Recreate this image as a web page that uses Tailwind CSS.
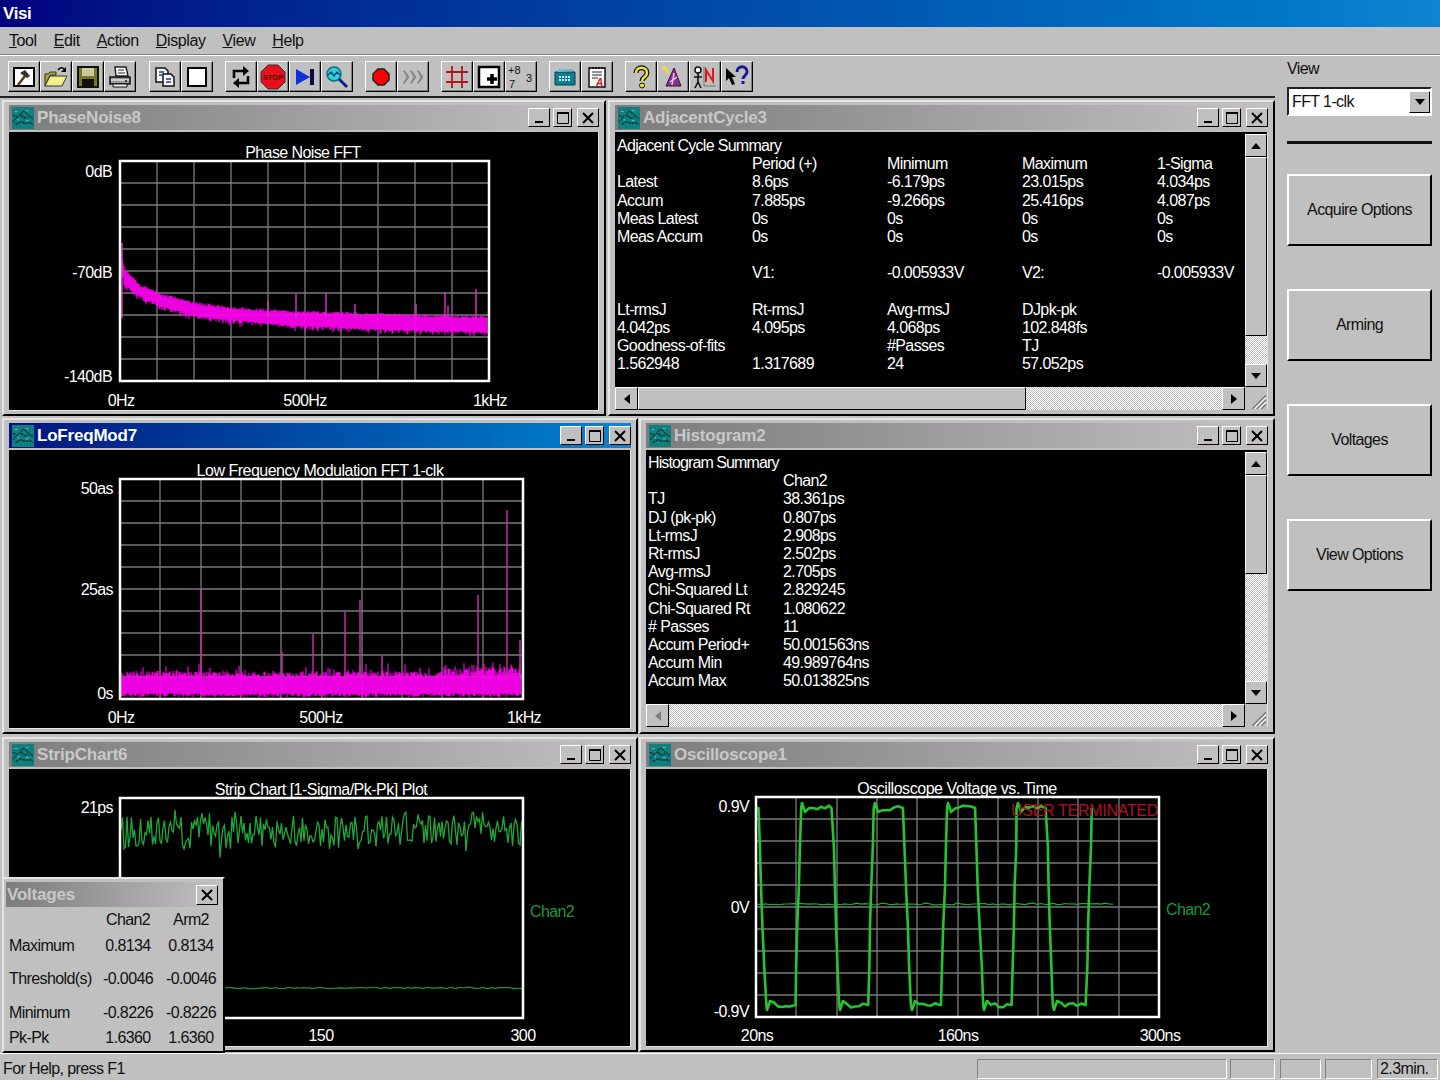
<!DOCTYPE html>
<html lang="en">
<head>
  <meta charset="UTF-8">
  <title>Visi</title>
  <script src="https://cdn.jsdelivr.net/npm/@tailwindcss/browser@4"></script>
</head>
<body class="w-[1440px] h-[1080px] overflow-hidden bg-[#c0c0c0] text-[#111] text-[16px] tracking-[-0.6px] font-['Liberation_Sans',Arial,sans-serif]">

  <svg class="hidden">
    <symbol id="win-icon" viewBox="0 0 24 24">
      <rect width="24" height="24" fill="#0f8080"/>
      <path d="M1 16c3-1 3-5 6-6s3-4 5-5 4 3 6 4 3 3 5 4" fill="none" stroke="#06302f" stroke-width="1.5" stroke-dasharray="2 1"/>
      <path d="M1 9l4 2M4 19l6-3 4 2 5-1 4 2M10 9l3 3 5-1" fill="none" stroke="#06302f" stroke-width="1.5" stroke-dasharray="3 1"/>
      <path d="M3 5h3M15 4h3M6 14h2M15 15h3" stroke="#9fb8b8" stroke-width="1"/>
    </symbol>
    <symbol id="g-min" viewBox="0 0 14 14"><rect x="3" y="10" width="8" height="2" fill="#000"/></symbol>
    <symbol id="g-max" viewBox="0 0 14 14"><path d="M1.500 2.500h11v10h-11z" fill="none" stroke="#000" stroke-width="1"/><rect x="1" y="1" width="12" height="2" fill="#000"/></symbol>
    <symbol id="g-close" viewBox="0 0 14 14"><path d="M2 2l10 10M12 2L2 12" stroke="#000" stroke-width="2"/></symbol>
    <symbol id="a-up" viewBox="0 0 14 14"><path d="M7 4l5 6H2z" fill="#000"/></symbol>
    <symbol id="a-down" viewBox="0 0 14 14"><path d="M7 10L2 4h10z" fill="#000"/></symbol>
    <symbol id="a-left" viewBox="0 0 14 14"><path d="M4 7l6-5v10z" fill="#000"/></symbol>
    <symbol id="a-right" viewBox="0 0 14 14"><path d="M10 7L4 2v10z" fill="#000"/></symbol>
    <symbol id="a-left-off" viewBox="0 0 14 14"><path d="M4 7l6-5v10z" fill="#808080"/></symbol>
    <symbol id="grip" viewBox="0 0 16 16"><path d="M15 3L3 15M15 7l-8 8M15 11l-4 4" stroke="#808080" stroke-width="1.5"/><path d="M15 5L5 15M15 9l-6 6" stroke="#fff" stroke-width="1"/></symbol>
  </svg>

  <!-- title bar -->
  <div class="h-[27px] pl-[3px] flex items-center text-white font-bold text-[17px] tracking-[-0.4px] bg-gradient-to-r from-[#00007f] to-[#1084d0]">Visi</div>

  <!-- menu -->
  <div class="h-[28px] pl-[9px] flex items-center gap-[17px] tracking-[-0.4px] border-b border-b-[#808080]">
    <span><u>T</u>ool</span>
    <span><u>E</u>dit</span>
    <span><u>A</u>ction</span>
    <span><u>D</u>isplay</span>
    <span><u>V</u>iew</span>
    <span><u>H</u>elp</span>
  </div>

  <div class="flex border-t border-t-white">
    <div class="w-[1275px] shrink-0">

      <!-- toolbar -->
      <div class="h-[42px] pl-[8px] pt-[5px] flex gap-[12px] border-b-2 border-b-[#222]">
        <div class="flex mr-px">
          <button class="w-[32px] h-[31px] flex items-center justify-center bg-[#c0c0c0] border border-t-white border-l-white border-r-black border-b-black shadow-[inset_-1px_-1px_0_#808080]">
            <svg width="24" height="24" viewBox="0 0 24 24"><rect x="2" y="3" width="20" height="18" fill="#fff" stroke="#000" stroke-width="2"/><path d="M6 20l7-9" stroke="#5a3a10" stroke-width="2.5"/><path d="M8 8l5-3 5 6-3 2z" fill="#333"/></svg>
          </button>
          <button class="w-[32px] h-[31px] flex items-center justify-center bg-[#c0c0c0] border border-t-white border-l-white border-r-black border-b-black shadow-[inset_-1px_-1px_0_#808080]">
            <svg width="24" height="24" viewBox="0 0 24 24"><path d="M1 21V9h3l2-2h6v3H6z" fill="#a9a93c" stroke="#333"/><path d="M1 21l5-10h17l-5 10z" fill="#f2f08a" stroke="#333"/><path d="M14 5c2-3 5-3 7 0" fill="none" stroke="#000" stroke-width="1.5"/><path d="M22 2v5h-5z" fill="#000"/></svg>
          </button>
          <button class="w-[32px] h-[31px] flex items-center justify-center bg-[#c0c0c0] border border-t-white border-l-white border-r-black border-b-black shadow-[inset_-1px_-1px_0_#808080]">
            <svg width="24" height="24" viewBox="0 0 24 24"><rect x="2" y="2" width="20" height="20" fill="#77772a" stroke="#111" stroke-width="2"/><rect x="6" y="3" width="12" height="8" fill="#c9c9a0"/><rect x="6" y="14" width="12" height="7" fill="#111"/></svg>
          </button>
          <button class="w-[32px] h-[31px] flex items-center justify-center bg-[#c0c0c0] border border-t-white border-l-white border-r-black border-b-black shadow-[inset_-1px_-1px_0_#808080]">
            <svg width="24" height="24" viewBox="0 0 24 24"><path d="M7 2h11l2 9H8z" fill="#fff" stroke="#222" stroke-width="1.5"/><path d="M10 5h6M10 8h7" stroke="#222"/><path d="M2 12h20v7H2z" fill="#999" stroke="#111" stroke-width="1.5"/><path d="M5 19h14v3H5z" fill="#eee" stroke="#111"/><path d="M3 15h18" stroke="#fff"/><circle cx="18" cy="16" r="1" fill="#111"/></svg>
          </button>
        </div>
        <div class="flex">
          <button class="w-[32px] h-[31px] flex items-center justify-center bg-[#c0c0c0] border border-t-white border-l-white border-r-black border-b-black shadow-[inset_-1px_-1px_0_#808080]">
            <svg width="24" height="24" viewBox="0 0 24 24"><path d="M3 3h9l3 3v11H3z" fill="#fff" stroke="#111" stroke-width="1.5"/><path d="M10 9h8l3 3v9H10z" fill="#fff" stroke="#111" stroke-width="1.5"/><path d="M6 7h5M6 10h3M13 14h5M13 17h5" stroke="#123a9a" stroke-width="1.3"/></svg>
          </button>
          <button class="w-[32px] h-[31px] flex items-center justify-center bg-[#c0c0c0] border border-t-white border-l-white border-r-black border-b-black shadow-[inset_-1px_-1px_0_#808080]">
            <svg width="22" height="22" viewBox="0 0 22 22"><rect x="2" y="2" width="18" height="18" fill="#fff" stroke="#000" stroke-width="2"/></svg>
          </button>
        </div>
        <div class="flex">
          <button class="w-[32px] h-[31px] flex items-center justify-center bg-[#c0c0c0] border border-t-white border-l-white border-r-black border-b-black shadow-[inset_-1px_-1px_0_#808080]">
            <svg width="24" height="24" viewBox="0 0 24 24"><path d="M5 13V6h12M19 11v7H7" fill="none" stroke="#000" stroke-width="2.6"/><path d="M14 1l6 5-6 5zM10 13l-6 5 6 5z" fill="#000"/></svg>
          </button>
          <button class="w-[32px] h-[31px] flex items-center justify-center bg-[#c0c0c0] border border-t-white border-l-white border-r-black border-b-black shadow-[inset_-1px_-1px_0_#808080]">
            <svg width="26" height="26" viewBox="0 0 26 26"><path d="M8 1h10l7 7v10l-7 7H8l-7-7V8z" fill="#e8101a" stroke="#333"/><text x="13" y="16" text-anchor="middle" font-size="8" font-weight="700" letter-spacing="-0.3" fill="#500">STOP</text></svg>
          </button>
          <button class="w-[32px] h-[31px] flex items-center justify-center bg-[#c0c0c0] border border-t-white border-l-white border-r-black border-b-black shadow-[inset_-1px_-1px_0_#808080]">
            <svg width="24" height="24" viewBox="0 0 24 24"><path d="M3 4l14 8-14 8z" fill="#0f2fd8"/><rect x="17" y="4" width="4" height="16" fill="#0a0a40"/></svg>
          </button>
          <button class="w-[32px] h-[31px] flex items-center justify-center bg-[#c0c0c0] border border-t-white border-l-white border-r-black border-b-black shadow-[inset_-1px_-1px_0_#808080]">
            <svg width="24" height="24" viewBox="0 0 24 24"><circle cx="9" cy="9" r="7" fill="#25d4d8" stroke="#0d6a78" stroke-width="1.5"/><path d="M3 10l3-3 3 4 3-4 3 3" fill="none" stroke="#0a3a80" stroke-width="1.3"/><path d="M14 14l8 8" stroke="#10208a" stroke-width="3"/></svg>
          </button>
        </div>
        <div class="flex">
          <button class="w-[32px] h-[31px] flex items-center justify-center bg-[#c0c0c0] border border-t-white border-l-white border-r-black border-b-black shadow-[inset_-1px_-1px_0_#808080]">
            <svg width="24" height="24" viewBox="0 0 24 24"><path d="M9 4h6l5 5v6l-5 5H9l-5-5V9z" fill="#f00" stroke="#222" stroke-width="1.5"/></svg>
          </button>
          <button class="w-[32px] h-[31px] flex items-center justify-center bg-[#c0c0c0] border border-t-white border-l-white border-r-black border-b-black shadow-[inset_-1px_-1px_0_#808080]">
            <svg width="24" height="24" viewBox="0 0 24 24"><path d="M1 5h3l5 7-5 7H1l4-7zM8 5h3l5 7-5 7H8l4-7zM15 5h3l5 7-5 7h-3l4-7z" fill="#8a8a8a" stroke="#d8d8d8" stroke-width="0.5"/></svg>
          </button>
        </div>
        <div class="flex">
          <button class="w-[32px] h-[31px] flex items-center justify-center bg-[#c0c0c0] border border-t-white border-l-white border-r-black border-b-black shadow-[inset_-1px_-1px_0_#808080]">
            <svg width="26" height="26" viewBox="0 0 26 26"><path d="M8 2v22M18 2v22M2 8h22M2 18h22" stroke="#b01818" stroke-width="1.8"/></svg>
          </button>
          <button class="w-[32px] h-[31px] flex items-center justify-center bg-[#c0c0c0] border border-t-white border-l-white border-r-black border-b-black shadow-[inset_-1px_-1px_0_#808080]">
            <svg width="24" height="24" viewBox="0 0 24 24"><rect x="2" y="2" width="20" height="20" fill="#fff" stroke="#000" stroke-width="2.5"/><path d="M15 9v10M10 14h10" stroke="#000" stroke-width="3.5"/></svg>
          </button>
          <button class="w-[32px] h-[31px] flex items-center justify-center bg-[#c0c0c0] border border-t-white border-l-white border-r-black border-b-black shadow-[inset_-1px_-1px_0_#808080]">
            <svg width="26" height="26" viewBox="0 0 26 26" font-size="11" letter-spacing="0" fill="#111"><text x="0" y="10">+8</text><text x="1" y="24">7</text><text x="18" y="18">3</text></svg>
          </button>
        </div>
        <div class="flex">
          <button class="w-[32px] h-[31px] flex items-center justify-center bg-[#c0c0c0] border border-t-white border-l-white border-r-black border-b-black shadow-[inset_-1px_-1px_0_#808080]">
            <svg width="24" height="24" viewBox="0 0 24 24"><path d="M2 7h20v13H2z" fill="#0e7f93" stroke="#063a4a"/><path d="M22 6l-3-2H5v3" fill="#7fb5c0"/><path d="M6 12h12M6 15h12" stroke="#bfeaf0" stroke-width="2" stroke-dasharray="2 1"/></svg>
          </button>
          <button class="w-[32px] h-[31px] flex items-center justify-center bg-[#c0c0c0] border border-t-white border-l-white border-r-black border-b-black shadow-[inset_-1px_-1px_0_#808080]">
            <svg width="24" height="24" viewBox="0 0 24 24"><path d="M4 3h16v19H4z" fill="#fff" stroke="#111" stroke-width="1.5"/><path d="M4 3h16" stroke="#111" stroke-width="2" stroke-dasharray="2 1"/><path d="M7 7h10M7 10h10M7 13h6" stroke="#223" stroke-width="1.2"/><text x="11" y="21" font-size="10" font-weight="700" font-style="italic" fill="#e01010">A</text></svg>
          </button>
        </div>
        <div class="flex">
          <button class="w-[32px] h-[31px] flex items-center justify-center bg-[#c0c0c0] border border-t-white border-l-white border-r-black border-b-black shadow-[inset_-1px_-1px_0_#808080]">
            <svg width="24" height="24" viewBox="0 0 24 24"><path d="M7 8c0-7 11-7 11 0 0 4-5 4-5 8" fill="none" stroke="#111" stroke-width="5"/><path d="M7 8c0-7 11-7 11 0 0 4-5 4-5 8" fill="none" stroke="#f4e62a" stroke-width="2.500"/><circle cx="13" cy="20.500" r="2.500" fill="#f4e62a" stroke="#111"/></svg>
          </button>
          <button class="w-[32px] h-[31px] flex items-center justify-center bg-[#c0c0c0] border border-t-white border-l-white border-r-black border-b-black shadow-[inset_-1px_-1px_0_#808080]">
            <svg width="24" height="24" viewBox="0 0 24 24"><path d="M13 3L5 21h15z" fill="#8f2f90" stroke="#301030"/><path d="M13 8l-2 12M16 12l-7 5" stroke="#e6c8e6" stroke-width="1.5"/><path d="M3 3l5 5" stroke="#f0e040" stroke-width="2"/><circle cx="3" cy="3" r="2" fill="#f0e040"/></svg>
          </button>
          <button class="w-[32px] h-[31px] flex items-center justify-center bg-[#c0c0c0] border border-t-white border-l-white border-r-black border-b-black shadow-[inset_-1px_-1px_0_#808080]">
            <svg width="26" height="26" viewBox="0 0 26 26"><circle cx="6" cy="6" r="3" fill="#fff" stroke="#111" stroke-width="1.5"/><path d="M6 9v9M2 13h8M6 18l-3 6M6 18l3 6" stroke="#111" stroke-width="1.6"/><path d="M12 3v19h12" fill="none" stroke="#777"/><path d="M14 18V6l7 11V4" fill="none" stroke="#e01818" stroke-width="2"/></svg>
          </button>
          <button class="w-[32px] h-[31px] flex items-center justify-center bg-[#c0c0c0] border border-t-white border-l-white border-r-black border-b-black shadow-[inset_-1px_-1px_0_#808080]">
            <svg width="26" height="26" viewBox="0 0 26 26"><path d="M2 4l10 9H8l3 7-3 1-3-7-3 3z" fill="#000"/><path d="M13 8c0-7 10-7 10 0 0 3-4 4-4 7" fill="none" stroke="#1a1a8c" stroke-width="3"/><rect x="17.500" y="17" width="3" height="3" fill="#1a1a8c"/></svg>
          </button>
        </div>
      </div>

      <!-- mdi area, child windows sit on a free canvas -->
      <div class="relative h-[955px]">

        <!-- PhaseNoise8 -->
        <div class="absolute left-[2px] top-[2px] w-[604px] h-[316px] flex flex-col px-[5px] py-[3px] bg-[#c0c0c0] border-2 border-t-[#e4e4e4] border-l-[#e4e4e4] border-r-black border-b-black">
          <div class="h-[25px] shrink-0 flex items-center gap-[2px] pl-[2px] bg-gradient-to-r from-[#7d7d7d] to-[#c4c0c4] text-[#c8c8c8] font-bold text-[17px] tracking-[-0.2px]">
            <svg width="24" height="22"><use href="#win-icon"/></svg>
            <span class="flex-1">PhaseNoise8</span>
            <span class="w-[22px] h-[19px] flex items-center justify-center bg-[#c0c0c0] border border-t-white border-l-white border-r-black border-b-black"><svg width="14" height="14"><use href="#g-min"/></svg></span>
            <span class="w-[19px] h-[19px] ml-[1px] flex items-center justify-center bg-[#c0c0c0] border border-t-white border-l-white border-r-black border-b-black"><svg width="14" height="14"><use href="#g-max"/></svg></span>
            <span class="w-[22px] h-[19px] ml-[3px] flex items-center justify-center bg-[#c0c0c0] border border-t-white border-l-white border-r-black border-b-black"><svg width="14" height="14"><use href="#g-close"/></svg></span>
          </div>
          <div class="mt-[2px] flex-1 relative overflow-hidden bg-black border-r border-b border-r-[#e4e4e4] border-b-[#e4e4e4]">
            <svg id="plot-phase" class="absolute left-0 top-0 fill-white" width="589" height="278" viewBox="9 132 589 278">
              <g></g>
              <text x="303" y="158" text-anchor="middle">Phase Noise FFT</text>
              <text x="112" y="177" text-anchor="end">0dB</text>
              <text x="112" y="278" text-anchor="end">-70dB</text>
              <text x="112" y="382" text-anchor="end">-140dB</text>
              <text x="121" y="406" text-anchor="middle">0Hz</text>
              <text x="305" y="406" text-anchor="middle">500Hz</text>
              <text x="490" y="406" text-anchor="middle">1kHz</text>
            </svg>
          </div>
        </div>

        <!-- AdjacentCycle3 -->
        <div class="absolute left-[608px] top-[2px] w-[667px] h-[316px] flex flex-col px-[5px] py-[3px] bg-[#c0c0c0] border-2 border-t-[#e4e4e4] border-l-[#e4e4e4] border-r-black border-b-black">
          <div class="h-[25px] shrink-0 flex items-center gap-[2px] pl-[2px] bg-gradient-to-r from-[#7d7d7d] to-[#c4c0c4] text-[#c8c8c8] font-bold text-[17px] tracking-[-0.2px]">
            <svg width="24" height="22"><use href="#win-icon"/></svg>
            <span class="flex-1">AdjacentCycle3</span>
            <span class="w-[22px] h-[19px] flex items-center justify-center bg-[#c0c0c0] border border-t-white border-l-white border-r-black border-b-black"><svg width="14" height="14"><use href="#g-min"/></svg></span>
            <span class="w-[19px] h-[19px] ml-[1px] flex items-center justify-center bg-[#c0c0c0] border border-t-white border-l-white border-r-black border-b-black"><svg width="14" height="14"><use href="#g-max"/></svg></span>
            <span class="w-[22px] h-[19px] ml-[3px] flex items-center justify-center bg-[#c0c0c0] border border-t-white border-l-white border-r-black border-b-black"><svg width="14" height="14"><use href="#g-close"/></svg></span>
          </div>
          <div class="mt-[2px] mb-[1px] flex-1 min-h-0 grid grid-cols-[1fr_22px] grid-rows-[1fr_23px] bg-black text-white border-r border-r-[#e4e4e4]">
            <div class="pl-[2px] pt-[5px] grid grid-cols-[135px_135px_135px_135px_1fr] auto-rows-[18.2px] leading-[18px] whitespace-nowrap">
              <div class="col-span-5 tracking-[-0.7px]">Adjacent Cycle Summary</div>
              <div></div><div>Period (+)</div><div>Minimum</div><div>Maximum</div><div>1-Sigma</div>
              <div>Latest</div><div>8.6ps</div><div>-6.179ps</div><div>23.015ps</div><div>4.034ps</div>
              <div>Accum</div><div>7.885ps</div><div>-9.266ps</div><div>25.416ps</div><div>4.087ps</div>
              <div>Meas Latest</div><div>0s</div><div>0s</div><div>0s</div><div>0s</div>
              <div>Meas Accum</div><div>0s</div><div>0s</div><div>0s</div><div>0s</div>
              <div class="col-span-5"></div>
              <div></div><div>V1:</div><div>-0.005933V</div><div>V2:</div><div>-0.005933V</div>
              <div class="col-span-5"></div>
              <div>Lt-rmsJ</div><div>Rt-rmsJ</div><div>Avg-rmsJ</div><div>DJpk-pk</div><div></div>
              <div>4.042ps</div><div>4.095ps</div><div>4.068ps</div><div>102.848fs</div><div></div>
              <div>Goodness-of-fits</div><div></div><div>#Passes</div><div>TJ</div><div></div>
              <div>1.562948</div><div>1.317689</div><div>24</div><div>57.052ps</div><div></div>
            </div>
            <div class="flex flex-col mt-[2px] bg-[repeating-conic-gradient(#fff_0_25%,#c0c0c0_0_50%)] bg-[length:2px_2px]">
              <span class="h-[23px] flex items-center justify-center bg-[#c0c0c0] border border-t-white border-l-white border-r-black border-b-black"><svg width="14" height="14"><use href="#a-up"/></svg></span>
              <span class="h-[179px] bg-[#c0c0c0] border border-t-white border-l-white border-r-black border-b-black"></span>
              <span class="flex-1"></span>
              <span class="h-[23px] flex items-center justify-center bg-[#c0c0c0] border border-t-white border-l-white border-r-black border-b-black"><svg width="14" height="14"><use href="#a-down"/></svg></span>
            </div>
            <div class="flex bg-[repeating-conic-gradient(#fff_0_25%,#c0c0c0_0_50%)] bg-[length:2px_2px]">
              <span class="w-[23px] flex items-center justify-center bg-[#c0c0c0] border border-t-white border-l-white border-r-black border-b-black"><svg width="14" height="14"><use href="#a-left"/></svg></span>
              <span class="w-[388px] bg-[#c0c0c0] border border-t-white border-l-white border-r-black border-b-black"></span>
              <span class="flex-1"></span>
              <span class="w-[23px] flex items-center justify-center bg-[#c0c0c0] border border-t-white border-l-white border-r-black border-b-black"><svg width="14" height="14"><use href="#a-right"/></svg></span>
            </div>
            <div class="flex items-end justify-end bg-[#c0c0c0]"><svg width="18" height="18"><use href="#grip"/></svg></div>
          </div>
        </div>

        <!-- LoFreqMod7, the active one -->
        <div class="absolute left-[2px] top-[320px] w-[636px] h-[316px] flex flex-col px-[5px] py-[3px] bg-[#c0c0c0] border-2 border-t-[#e4e4e4] border-l-[#e4e4e4] border-r-black border-b-black">
          <div class="h-[25px] shrink-0 flex items-center gap-[2px] pl-[2px] bg-gradient-to-r from-[#00107f] to-[#1084d0] text-white font-bold text-[17px] tracking-[-0.2px]">
            <svg width="24" height="22"><use href="#win-icon"/></svg>
            <span class="flex-1">LoFreqMod7</span>
            <span class="w-[22px] h-[19px] flex items-center justify-center bg-[#c0c0c0] border border-t-white border-l-white border-r-black border-b-black"><svg width="14" height="14"><use href="#g-min"/></svg></span>
            <span class="w-[19px] h-[19px] ml-[1px] flex items-center justify-center bg-[#c0c0c0] border border-t-white border-l-white border-r-black border-b-black"><svg width="14" height="14"><use href="#g-max"/></svg></span>
            <span class="w-[22px] h-[19px] ml-[3px] flex items-center justify-center bg-[#c0c0c0] border border-t-white border-l-white border-r-black border-b-black"><svg width="14" height="14"><use href="#g-close"/></svg></span>
          </div>
          <div class="mt-[2px] flex-1 relative overflow-hidden bg-black border-r border-b border-r-[#e4e4e4] border-b-[#e4e4e4]">
            <svg id="plot-lofreq" class="absolute left-0 top-0 fill-white" width="622" height="279" viewBox="9 450 622 279">
              <g></g>
              <text x="320" y="476" text-anchor="middle" class="tracking-[-0.5px]">Low Frequency Modulation FFT 1-clk</text>
              <text x="113" y="494" text-anchor="end">50as</text>
              <text x="113" y="595" text-anchor="end">25as</text>
              <text x="113" y="699" text-anchor="end">0s</text>
              <text x="121" y="723" text-anchor="middle">0Hz</text>
              <text x="321" y="723" text-anchor="middle">500Hz</text>
              <text x="524" y="723" text-anchor="middle">1kHz</text>
            </svg>
          </div>
        </div>

        <!-- Histogram2 -->
        <div class="absolute left-[639px] top-[320px] w-[636px] h-[316px] flex flex-col px-[5px] py-[3px] bg-[#c0c0c0] border-2 border-t-[#e4e4e4] border-l-[#e4e4e4] border-r-black border-b-black">
          <div class="h-[25px] shrink-0 flex items-center gap-[2px] pl-[2px] bg-gradient-to-r from-[#7d7d7d] to-[#c4c0c4] text-[#c8c8c8] font-bold text-[17px] tracking-[-0.2px]">
            <svg width="24" height="22"><use href="#win-icon"/></svg>
            <span class="flex-1">Histogram2</span>
            <span class="w-[22px] h-[19px] flex items-center justify-center bg-[#c0c0c0] border border-t-white border-l-white border-r-black border-b-black"><svg width="14" height="14"><use href="#g-min"/></svg></span>
            <span class="w-[19px] h-[19px] ml-[1px] flex items-center justify-center bg-[#c0c0c0] border border-t-white border-l-white border-r-black border-b-black"><svg width="14" height="14"><use href="#g-max"/></svg></span>
            <span class="w-[22px] h-[19px] ml-[3px] flex items-center justify-center bg-[#c0c0c0] border border-t-white border-l-white border-r-black border-b-black"><svg width="14" height="14"><use href="#g-close"/></svg></span>
          </div>
          <div class="mt-[2px] mb-[2px] flex-1 min-h-0 grid grid-cols-[1fr_22px] grid-rows-[1fr_23px] bg-black text-white border-r border-r-[#e4e4e4]">
            <div class="pl-[2px] pt-[4px] grid grid-cols-[135px_1fr] auto-rows-[18.2px] leading-[18px] whitespace-nowrap">
              <div class="col-span-2 tracking-[-0.9px]">Histogram Summary</div>
              <div></div><div>Chan2</div>
              <div>TJ</div><div>38.361ps</div>
              <div>DJ (pk-pk)</div><div>0.807ps</div>
              <div>Lt-rmsJ</div><div>2.908ps</div>
              <div>Rt-rmsJ</div><div>2.502ps</div>
              <div>Avg-rmsJ</div><div>2.705ps</div>
              <div>Chi-Squared Lt</div><div>2.829245</div>
              <div>Chi-Squared Rt</div><div>1.080622</div>
              <div># Passes</div><div>11</div>
              <div>Accum Period+</div><div>50.001563ns</div>
              <div>Accum Min</div><div>49.989764ns</div>
              <div>Accum Max</div><div>50.013825ns</div>
            </div>
            <div class="flex flex-col mt-[2px] bg-[repeating-conic-gradient(#fff_0_25%,#c0c0c0_0_50%)] bg-[length:2px_2px]">
              <span class="h-[23px] flex items-center justify-center bg-[#c0c0c0] border border-t-white border-l-white border-r-black border-b-black"><svg width="14" height="14"><use href="#a-up"/></svg></span>
              <span class="h-[99px] bg-[#c0c0c0] border border-t-white border-l-white border-r-black border-b-black"></span>
              <span class="flex-1"></span>
              <span class="h-[23px] flex items-center justify-center bg-[#c0c0c0] border border-t-white border-l-white border-r-black border-b-black"><svg width="14" height="14"><use href="#a-down"/></svg></span>
            </div>
            <div class="flex justify-between bg-[repeating-conic-gradient(#fff_0_25%,#c0c0c0_0_50%)] bg-[length:2px_2px]">
              <span class="w-[23px] flex items-center justify-center bg-[#c0c0c0] border border-t-white border-l-white border-r-black border-b-black"><svg width="14" height="14"><use href="#a-left-off"/></svg></span>
              <span class="w-[23px] flex items-center justify-center bg-[#c0c0c0] border border-t-white border-l-white border-r-black border-b-black"><svg width="14" height="14"><use href="#a-right"/></svg></span>
            </div>
            <div class="flex items-end justify-end bg-[#c0c0c0]"><svg width="18" height="18"><use href="#grip"/></svg></div>
          </div>
        </div>

        <!-- StripChart6 -->
        <div class="absolute left-[2px] top-[639px] w-[636px] h-[315px] flex flex-col px-[5px] py-[3px] bg-[#c0c0c0] border-2 border-t-[#e4e4e4] border-l-[#e4e4e4] border-r-black border-b-black">
          <div class="h-[25px] shrink-0 flex items-center gap-[2px] pl-[2px] bg-gradient-to-r from-[#7d7d7d] to-[#c4c0c4] text-[#c8c8c8] font-bold text-[17px] tracking-[-0.2px]">
            <svg width="24" height="22"><use href="#win-icon"/></svg>
            <span class="flex-1">StripChart6</span>
            <span class="w-[22px] h-[19px] flex items-center justify-center bg-[#c0c0c0] border border-t-white border-l-white border-r-black border-b-black"><svg width="14" height="14"><use href="#g-min"/></svg></span>
            <span class="w-[19px] h-[19px] ml-[1px] flex items-center justify-center bg-[#c0c0c0] border border-t-white border-l-white border-r-black border-b-black"><svg width="14" height="14"><use href="#g-max"/></svg></span>
            <span class="w-[22px] h-[19px] ml-[3px] flex items-center justify-center bg-[#c0c0c0] border border-t-white border-l-white border-r-black border-b-black"><svg width="14" height="14"><use href="#g-close"/></svg></span>
          </div>
          <div class="mt-[2px] flex-1 relative overflow-hidden bg-black border-r border-b border-r-[#e4e4e4] border-b-[#e4e4e4]">
            <svg id="plot-strip" class="absolute left-0 top-0 fill-white" width="622" height="278" viewBox="9 769 622 278">
              <g></g>
              <text x="321" y="795" text-anchor="middle" class="tracking-[-0.5px]">Strip Chart [1-Sigma/Pk-Pk] Plot</text>
              <text x="113" y="813" text-anchor="end">21ps</text>
              <text x="321" y="1041" text-anchor="middle">150</text>
              <text x="523" y="1041" text-anchor="middle">300</text>
              <text x="530" y="917" class="fill-[#1a9a3a]">Chan2</text>
            </svg>
          </div>
        </div>

        <!-- Oscilloscope1 -->
        <div class="absolute left-[639px] top-[639px] w-[636px] h-[315px] flex flex-col px-[5px] py-[3px] bg-[#c0c0c0] border-2 border-t-[#e4e4e4] border-l-[#e4e4e4] border-r-black border-b-black">
          <div class="h-[25px] shrink-0 flex items-center gap-[2px] pl-[2px] bg-gradient-to-r from-[#7d7d7d] to-[#c4c0c4] text-[#c8c8c8] font-bold text-[17px] tracking-[-0.2px]">
            <svg width="24" height="22"><use href="#win-icon"/></svg>
            <span class="flex-1">Oscilloscope1</span>
            <span class="w-[22px] h-[19px] flex items-center justify-center bg-[#c0c0c0] border border-t-white border-l-white border-r-black border-b-black"><svg width="14" height="14"><use href="#g-min"/></svg></span>
            <span class="w-[19px] h-[19px] ml-[1px] flex items-center justify-center bg-[#c0c0c0] border border-t-white border-l-white border-r-black border-b-black"><svg width="14" height="14"><use href="#g-max"/></svg></span>
            <span class="w-[22px] h-[19px] ml-[3px] flex items-center justify-center bg-[#c0c0c0] border border-t-white border-l-white border-r-black border-b-black"><svg width="14" height="14"><use href="#g-close"/></svg></span>
          </div>
          <div class="mt-[2px] flex-1 relative overflow-hidden bg-black border-r border-b border-r-[#e4e4e4] border-b-[#e4e4e4]">
            <svg id="plot-scope" class="absolute left-0 top-0 fill-white" width="622" height="278" viewBox="646 769 622 278">
              <g></g>
              <text x="957" y="794" text-anchor="middle" class="tracking-[-0.45px]">Oscilloscope Voltage vs. Time</text>
              <text x="749" y="812" text-anchor="end">0.9V</text>
              <text x="749" y="913" text-anchor="end">0V</text>
              <text x="749" y="1017" text-anchor="end">-0.9V</text>
              <text x="757" y="1041" text-anchor="middle">20ns</text>
              <text x="958" y="1041" text-anchor="middle">160ns</text>
              <text x="1160" y="1041" text-anchor="middle">300ns</text>
              <text x="1166" y="915" class="fill-[#1a9a3a]">Chan2</text>
              <text x="1011" y="816" class="fill-[#b01020] tracking-[-0.3px]">USER TERMINATED</text>
            </svg>
          </div>
        </div>

        <!-- Voltages floating palette -->
        <div class="absolute z-10 left-[2px] top-[779px] w-[223px] h-[176px] px-[2px] pt-[3px] bg-[#c0c0c0] border-2 border-t-[#e4e4e4] border-l-[#e4e4e4] border-r-black border-b-black">
          <div class="h-[25px] flex items-center justify-between pl-[1px] pr-[3px] bg-gradient-to-r from-[#7d7d7d] to-[#c4c0c4] text-[#c8c8c8] font-bold text-[17px] tracking-[-0.2px]">
            <span>Voltages</span>
            <span class="w-[22px] h-[20px] flex items-center justify-center bg-[#c0c0c0] border border-t-white border-l-white border-r-black border-b-black"><svg width="14" height="14"><use href="#g-close"/></svg></span>
          </div>
          <div class="pl-[3px] grid grid-cols-[94px_50px_76px] grid-rows-[26px_25px_42px_26px_23px] items-center whitespace-nowrap">
            <div></div><div class="text-center">Chan2</div><div class="text-center">Arm2</div>
            <div>Maximum</div><div class="text-center">0.8134</div><div class="text-center">0.8134</div>
            <div>Threshold(s)</div><div class="text-center">-0.0046</div><div class="text-center">-0.0046</div>
            <div>Minimum</div><div class="text-center">-0.8226</div><div class="text-center">-0.8226</div>
            <div>Pk-Pk</div><div class="text-center">1.6360</div><div class="text-center">1.6360</div>
          </div>
        </div>

      </div>
    </div>

    <!-- right panel -->
    <div class="w-[165px] pl-[12px] pr-[8px] flex flex-col">
      <div class="h-[31px] pt-[2px] leading-[22px]">View</div>
      <div class="h-[29px] flex items-center bg-white border-2 border-t-[#222] border-l-[#222] border-r-white border-b-white">
        <span class="flex-1 pl-[3px]">FFT 1-clk</span>
        <span class="w-[21px] h-[22px] flex items-center justify-center bg-[#c0c0c0] border border-t-white border-l-white border-r-black border-b-black"><svg width="14" height="14"><use href="#a-down"/></svg></span>
      </div>
      <div class="h-[3px] mt-[25px] bg-[#111]"></div>
      <div class="mt-[30px] h-[72px] flex items-center justify-center bg-[#c0c0c0] border-2 border-t-white border-l-white border-r-black border-b-black">Acquire Options</div>
      <div class="mt-[43px] h-[72px] flex items-center justify-center bg-[#c0c0c0] border-2 border-t-white border-l-white border-r-black border-b-black">Arming</div>
      <div class="mt-[43px] h-[72px] flex items-center justify-center bg-[#c0c0c0] border-2 border-t-white border-l-white border-r-black border-b-black">Voltages</div>
      <div class="mt-[43px] h-[72px] flex items-center justify-center bg-[#c0c0c0] border-2 border-t-white border-l-white border-r-black border-b-black">View Options</div>
    </div>
  </div>

  <!-- status bar -->
  <div class="h-[27px] flex items-center pt-[3px] border-t border-t-white">
    <span class="flex-1 pl-[3px]">For Help, press F1</span>
    <span class="w-[250px] h-[20px] border border-t-[#808080] border-l-[#808080] border-r-white border-b-white"></span>
    <span class="w-[45px] h-[20px] ml-[3px] border border-t-[#808080] border-l-[#808080] border-r-white border-b-white"></span>
    <span class="w-[41px] h-[20px] ml-[5px] border border-t-[#808080] border-l-[#808080] border-r-white border-b-white"></span>
    <span class="w-[47px] h-[20px] ml-[4px] border border-t-[#808080] border-l-[#808080] border-r-white border-b-white"></span>
    <span class="w-[61px] h-[20px] ml-[5px] mr-[2px] pl-[2px] leading-[18px] border border-t-[#808080] border-l-[#808080] border-r-white border-b-white">2.3min.</span>
  </div>

  <script>
    let seed = 4711;
    function rnd() {
      seed = (seed * 16807) % 2147483647;
      return seed / 2147483647;
    }

    // piecewise linear lookup
    function lerp(table, x) {
      for (let i = 1; i < table.length; i++) {
        if (x <= table[i][0]) {
          const a = table[i - 1], b = table[i];
          return a[1] + (b[1] - a[1]) * (x - a[0]) / (b[0] - a[0]);
        }
      }
      return table[table.length - 1][1];
    }

    function grid(x0, y0, x1, y1, nx, ny) {
      let d = '';
      for (let i = 1; i < nx; i++) {
        const x = Math.round(x0 + (x1 - x0) * i / nx);
        d += `M${x} ${y0}V${y1}`;
      }
      for (let i = 1; i < ny; i++) {
        const y = Math.round(y0 + (y1 - y0) * i / ny);
        d += `M${x0} ${y}H${x1}`;
      }
      return `<path d="${d}" stroke="#7a7a7a" stroke-width="1.3" fill="none"/>`;
    }

    function frame(x0, y0, x1, y1) {
      return `<rect x="${x0}" y="${y0}" width="${x1 - x0}" height="${y1 - y0}" fill="none" stroke="#fff" stroke-width="2.5"/>`;
    }

    function spikes(list, bottom, color) {
      return list.map(s => `<path d="M${s[0]} ${bottom(s[0])}V${s[1]}" stroke="${color}" stroke-width="1.5"/>`).join('');
    }

    // phase noise
    const phTop = [[120, 250], [125, 270], [140, 285], [160, 294], [195, 303], [230, 308], [300, 312], [400, 315], [488, 317]];
    const phBot = [[120, 268], [125, 287], [140, 298], [160, 308], [195, 318], [230, 322], [300, 328], [400, 332], [488, 334]];
    let band = '';
    for (let x = 121; x <= 487; x++) {
      band += `M${x} ${(lerp(phTop, x) + rnd() * 3 - 1.5).toFixed(1)}V${(lerp(phBot, x) + rnd() * rnd() * 6 - 2).toFixed(1)}`;
    }
    document.querySelector('#plot-phase g').innerHTML =
      grid(120, 161, 489, 381, 10, 10) +
      `<path d="${band}" stroke="#ff00f0" stroke-width="1.2" opacity="0.93"/>` +
      spikes([[122, 243], [268, 301], [296, 294], [326, 292], [355, 304], [416, 304], [445, 292], [448, 306], [476, 289]], () => 318, '#d030c0') +
      frame(120, 161, 489, 381);

    // low frequency modulation
    let lowBand = '';
    for (let x = 121; x <= 521; x++) {
      const top = 678 - rnd() * 7 - (rnd() > 0.9 ? rnd() * 10 : 0) - (x > 440 ? rnd() * 8 : 0);
      lowBand += `M${x} ${top.toFixed(1)}V${(693 + rnd() * 4).toFixed(1)}`;
    }
    document.querySelector('#plot-lofreq g').innerHTML =
      grid(120, 479, 523, 699, 10, 10) +
      `<path d="${lowBand}" stroke="#ff00f0" stroke-width="1.2" opacity="0.93"/>` +
      spikes([[201, 590], [282, 652], [313, 634], [345, 612], [360, 600], [382, 656], [478, 595], [507, 510], [520, 640]], () => 680, '#c82aa8') +
      frame(120, 479, 523, 699);

    // strip chart, no grid here
    let trace = 'M121 830';
    for (let x = 122.5; x <= 522; x += 1.5) {
      const y = 832 + (rnd() - 0.5) * 34 + (rnd() > 0.85 ? (rnd() - 0.5) * 24 : 0) - (x > 400 ? 3 : 0);
      trace += `L${x} ${Math.min(862, Math.max(804, y)).toFixed(1)}`;
    }
    let flat = 'M121 988';
    for (let x = 123; x <= 522; x += 3) flat += `L${x} ${(988 + (rnd() - 0.5) * 1.6).toFixed(1)}`;
    document.querySelector('#plot-strip g').innerHTML =
      `<path d="${trace}" stroke="#1fa83a" stroke-width="1.3" fill="none"/>` +
      `<path d="${flat}" stroke="#1a8f32" stroke-width="1.3" fill="none"/>` +
      frame(120, 798, 523, 1018);

    // oscilloscope square wave
    const edges = [[758, 766], [795, 801], [832, 839], [868, 874], [903, 911], [941, 947], [975, 983], [1012, 1017], [1046, 1053], [1086, 1092]];
    const hi = 808, lo = 1005;
    let wave = `M757 ${hi}`;
    edges.forEach((e, i) => {
      const falling = i % 2 === 0;
      const from = falling ? hi : lo, to = falling ? lo : hi;
      for (let k = 0; k <= 5; k++) {
        wave += `L${(e[0] + (e[1] - e[0]) * k / 5 + rnd() - 0.5).toFixed(1)} ${from + (to - from) * k / 5}`;
      }
      if (i === edges.length - 1) return;
      const next = edges[i + 1][0];
      const sign = falling ? 1 : -1;
      wave += `L${e[1] + 1} ${to + sign * 5}L${e[1] + 4} ${to - sign * 4}`;
      for (let x = e[1] + 8; x < next - 1; x += 4) {
        wave += `L${x} ${(to + (rnd() - 0.5) * 5).toFixed(1)}`;
      }
    });
    let mid = 'M757 904';
    for (let x = 761; x <= 1116; x += 4) mid += `L${x} ${(904 + (rnd() - 0.5) * 1.8).toFixed(1)}`;
    document.querySelector('#plot-scope g').innerHTML =
      grid(756, 797, 1159, 1017, 10, 10) +
      `<path d="${mid}" stroke="#1fa83a" stroke-width="1.2" fill="none"/>` +
      `<path d="${wave}" stroke="#25c430" stroke-width="2.6" fill="none" stroke-linejoin="round"/>` +
      frame(756, 797, 1159, 1017);
  </script>
</body>
</html>
